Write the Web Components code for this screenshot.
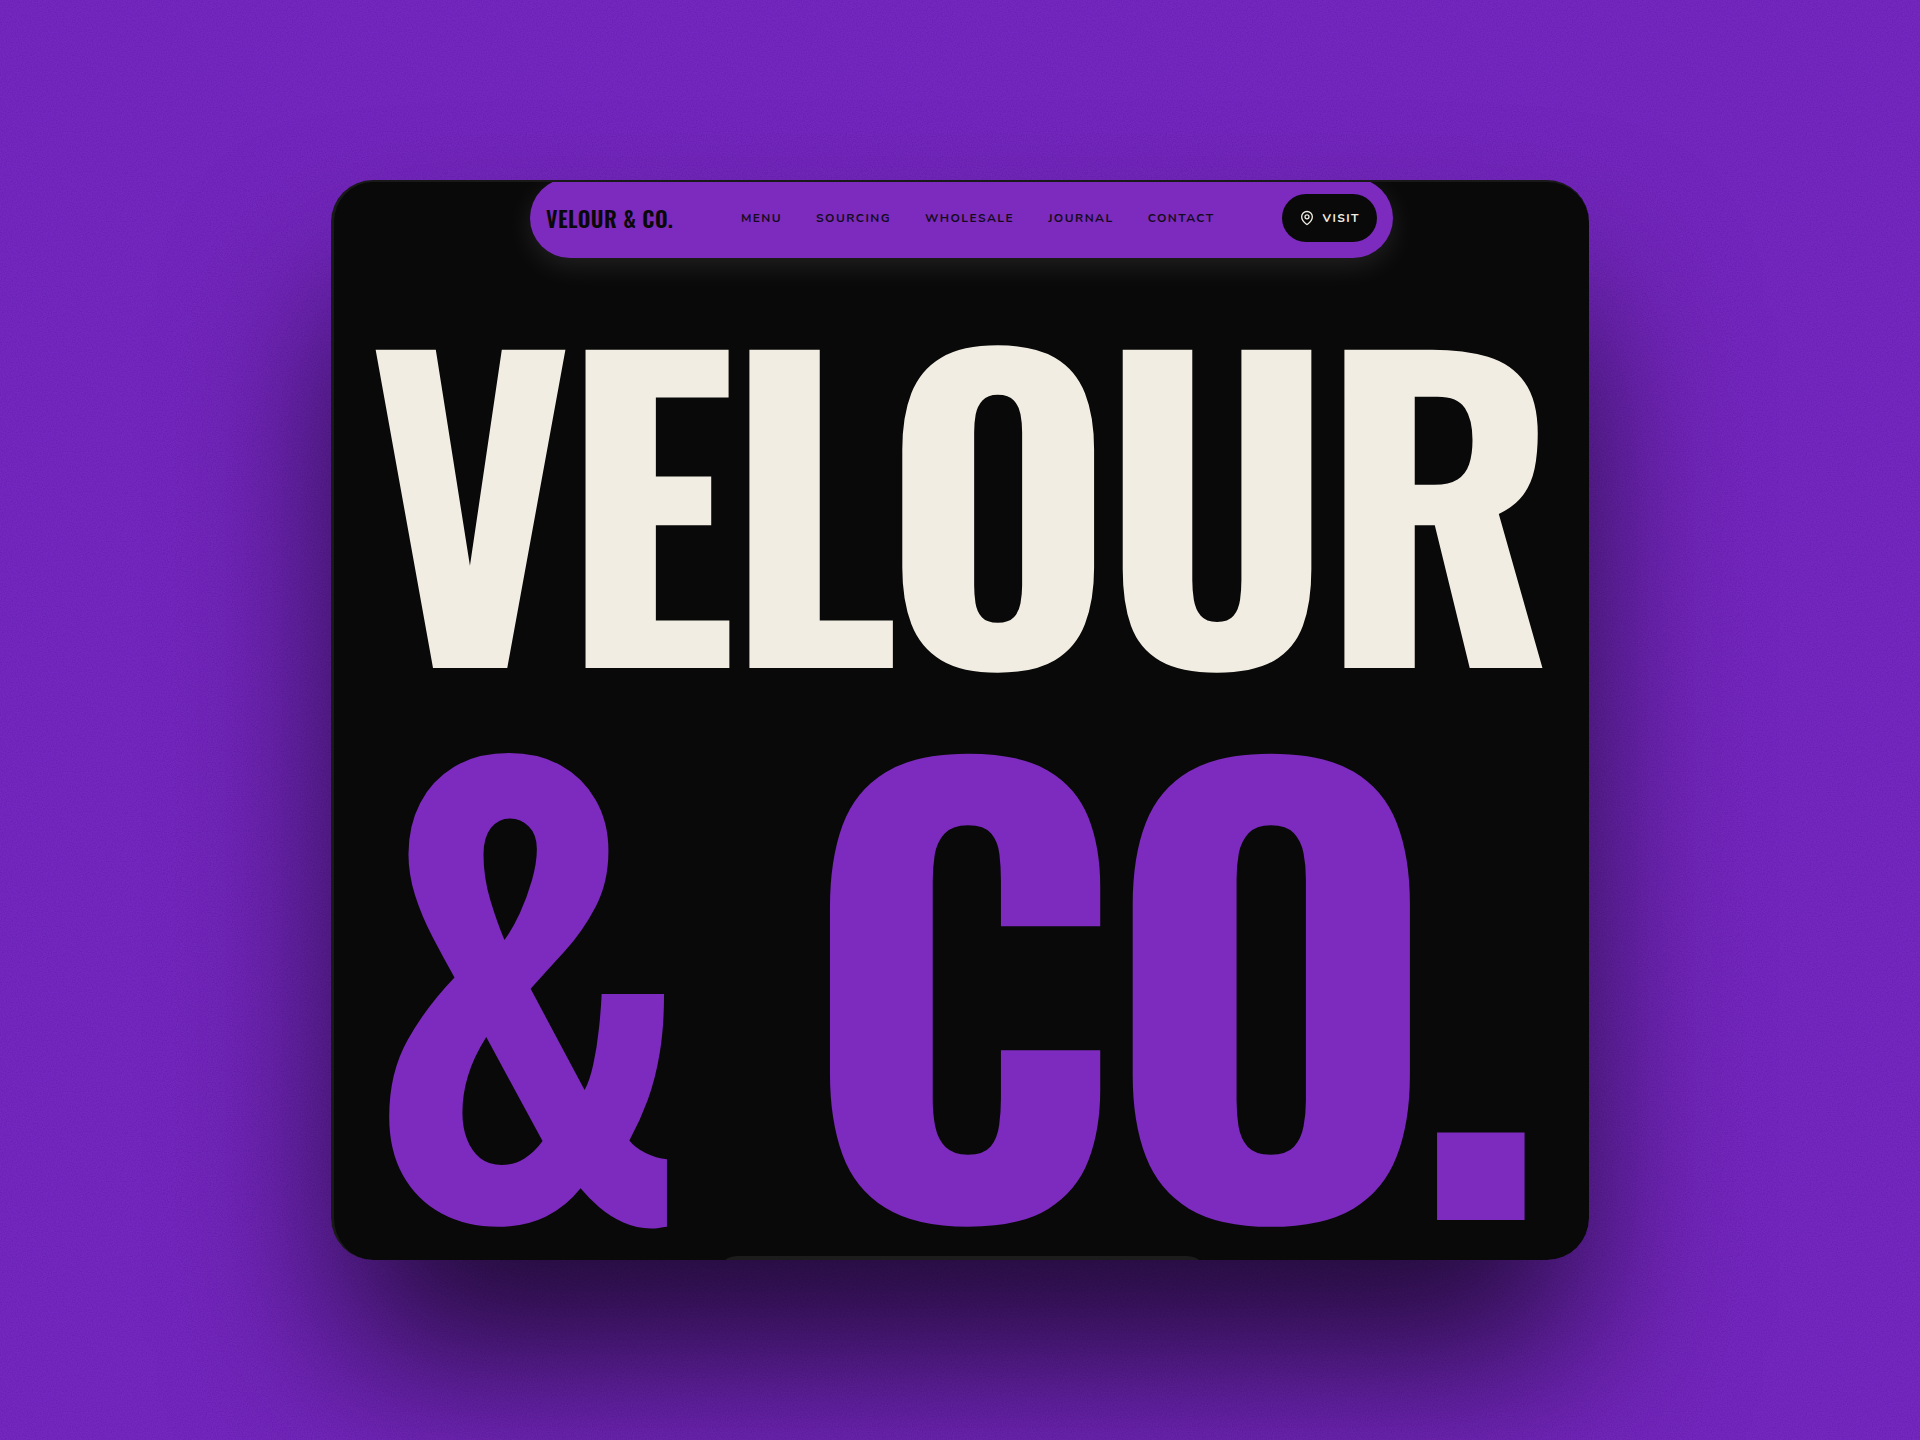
<!DOCTYPE html>
<html lang="en">
<head>
<meta charset="utf-8">
<meta name="viewport" content="width=device-width, initial-scale=1">
<title>Velour &amp; Co.</title>
<style>
  :root {
    --violet: #7c2bbe;
    --ink: #090909;
    --cream: #f1ede2;
    --edge: #19191a;
    --display: Oswald, Anton, "Liberation Sans", sans-serif;
    --text: Nunito, "Nunito Sans", Lato, "Open Sans", sans-serif;
  }
  html, body { margin: 0; min-height: 100vh; }
  body { background: #7528be; font-family: var(--text); overflow: hidden; }
</style>
</head>
<body>
<velour-stage>
  <velour-card>
    <velour-nav slot="header">
      <a slot="brand" href="#home">VELOUR &amp; CO.</a>
      <nav-link href="#menu">MENU</nav-link>
      <nav-link href="#sourcing">SOURCING</nav-link>
      <nav-link href="#wholesale">WHOLESALE</nav-link>
      <nav-link href="#journal">JOURNAL</nav-link>
      <nav-link href="#contact">CONTACT</nav-link>
      <visit-button slot="action">VISIT</visit-button>
    </velour-nav>
    <velour-title>
      <span slot="first">VELOUR</span>
      <span slot="second">&amp; CO.</span>
    </velour-title>
  </velour-card>
</velour-stage>

<script>
const define = (name, html, setup) => {
  const template = document.createElement('template');
  template.innerHTML = html;
  customElements.define(name, class extends HTMLElement {
    constructor() {
      super();
      this.attachShadow({ mode: 'open' }).append(template.content.cloneNode(true));
    }
    connectedCallback() { if (setup) setup(this, this.shadowRoot); }
  });
};

define('velour-stage', `
  <style>
    :host { display: grid; grid-template: minmax(100vh, auto) / 1fr; }
    .grain { grid-area: 1 / 1; width: 100%; height: 100%; opacity: .18; }
    .center { grid-area: 1 / 1; display: flex; align-items: center; justify-content: center; }
  </style>
  <svg class="grain" aria-hidden="true">
    <filter id="noise" x="0" y="0" width="100%" height="100%">
      <feTurbulence type="fractalNoise" baseFrequency=".8" numOctaves="2" stitchTiles="stitch"/>
      <feColorMatrix values="0 0 0 0 .05  0 0 0 0 0  0 0 0 0 .3  2.4 0 0 0 -.9"/>
    </filter>
    <rect width="100%" height="100%" filter="url(#noise)"/>
  </svg>
  <div class="center"><slot></slot></div>
`);

define('velour-card', `
  <style>
    :host { display: block; width: 100%; max-width: 1258px; border-radius: 42px;
      box-shadow: 0 110px 170px -14px rgba(0, 0, 0, .72); z-index: 1; }
    main { box-sizing: border-box; min-height: 1080px; border-radius: 42px; overflow: hidden;
      border: 0 solid var(--edge); border-width: 2px 0 0 3px; background: var(--ink);
      display: flex; flex-direction: column; align-items: center; }
    .peek { width: 490px; height: 4px; margin-top: auto; overflow: hidden; }
    .peek::before { content: ""; display: block; height: 40px; border-radius: 20px; background: #1c1c1c; }
  </style>
  <main>
    <slot name="header"></slot>
    <slot></slot>
    <div class="peek"></div>
  </main>
`);

define('velour-nav', `
  <style>
    :host { display: block; width: 863px; max-width: 100%; margin-top: -4px; }
    header { box-sizing: border-box; height: 80px; padding: 0 16px; border-radius: 40px;
      background: var(--violet); box-shadow: 0 8px 28px rgba(255, 255, 255, .1);
      display: flex; align-items: center; justify-content: space-between; }
    nav { display: flex; gap: 34px; }
    ::slotted(a) { font: 600 22px/32px var(--display); letter-spacing: .02em; color: var(--ink); text-decoration: none; }
  </style>
  <header>
    <slot name="brand"></slot>
    <nav><slot></slot></nav>
    <slot name="action"></slot>
  </header>
`);

define('nav-link', `
  <style>
    :host { display: block; }
    a { display: block; font: 700 12px/16px var(--text); letter-spacing: .12em; color: #150b1d; text-decoration: none; }
  </style>
  <a><slot></slot></a>
`, (host, root) => root.querySelector('a').setAttribute('href', host.getAttribute('href')));

define('visit-button', `
  <style>
    :host { display: block; }
    button { display: flex; align-items: center; gap: 7px; height: 48px; padding: 0 17px; border: 0;
      border-radius: 24px; background: var(--ink); color: var(--cream); cursor: pointer;
      font: 700 12px/16px var(--text); letter-spacing: .12em; }
    svg { width: 16px; height: 16px; fill: none; stroke: currentColor; stroke-width: 2; stroke-linecap: round; stroke-linejoin: round; }
  </style>
  <button type="button">
    <svg viewBox="0 0 24 24" aria-hidden="true">
      <path d="M20 10.3c0 5-4.6 9.2-7.2 11.1a1.4 1.4 0 0 1-1.6 0C8.6 19.5 4 15.3 4 10.3a8 8 0 0 1 16 0z"/>
      <circle cx="12" cy="10.3" r="3"/>
    </svg>
    <slot></slot>
  </button>
`);

define('velour-title', `
  <style>
    :host { display: block; align-self: stretch; }
    h1 { margin: 0; padding: 33px 33px 0; font-family: var(--display); font-weight: 700;
      display: flex; flex-direction: column; gap: 22px; white-space: nowrap; }
    span { letter-spacing: -.03em; }
    .first { font-size: 393px; line-height: 400px; color: var(--cream); }
    .second { font-size: 568px; line-height: 500px; color: var(--violet); }
  </style>
  <h1>
    <span class="first"><slot name="first"></slot></span>
    <span class="second"><slot name="second"></slot></span>
  </h1>
`);
</script>
</body>
</html>
